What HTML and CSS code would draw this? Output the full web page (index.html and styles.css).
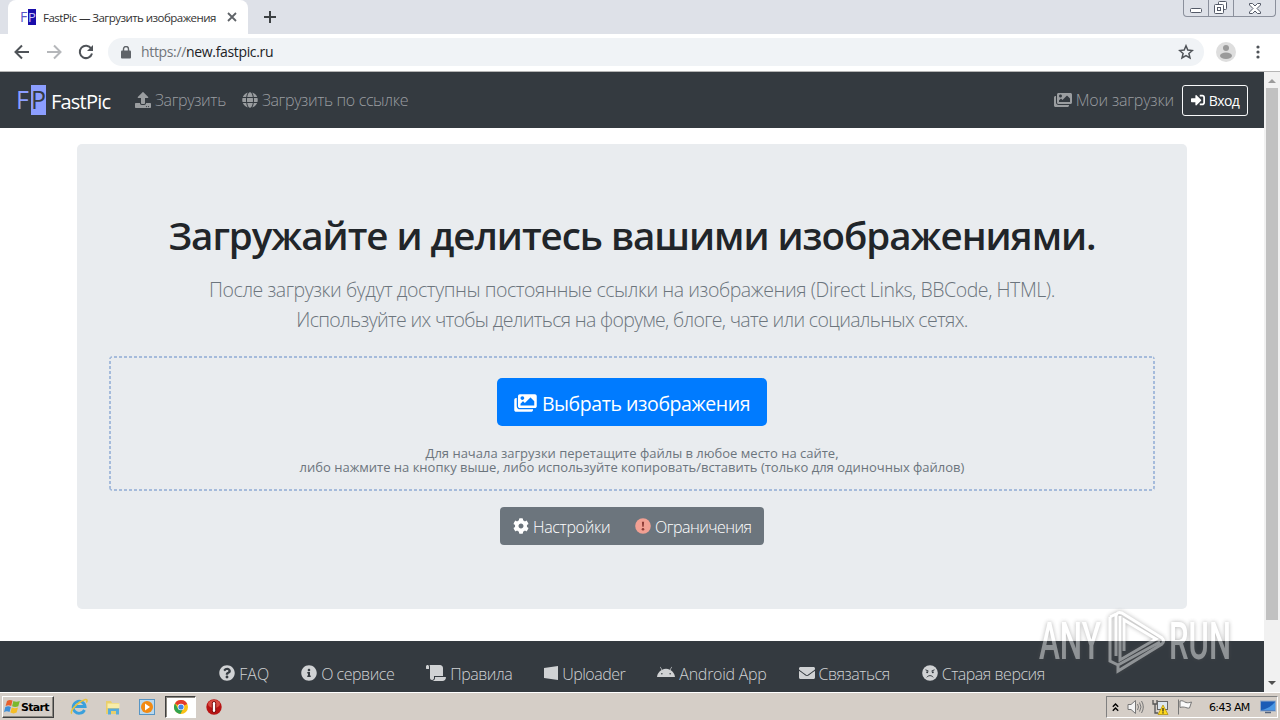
FILE: index.html
```html
<!DOCTYPE html>
<html lang="ru">

<head>
    <meta charset="UTF-8">
    <meta name="viewport" content="width=device-width, initial-scale=1.0">
    <title>FastPic — Загрузить изображения</title>
    <link rel="stylesheet" href="styles.css">
</head>

<body>
    <!-- icons -->
    <svg class="sprite" width="0" height="0">
        <symbol id="upload" viewBox="0 0 512 512"><path d="M296 384h-80c-13.3 0-24-10.7-24-24V192h-87.7c-17.8 0-26.7-21.5-14.1-34.1L242.3 5.7c7.5-7.5 19.8-7.5 27.3 0l152.2 152.2c12.6 12.6 3.7 34.1-14.1 34.1H320v168c0 13.3-10.7 24-24 24zm216-8v112c0 13.3-10.7 24-24 24H24c-13.3 0-24-10.7-24-24V376c0-13.3 10.7-24 24-24h136v8c0 30.9 25.1 56 56 56h80c30.9 0 56-25.1 56-56v-8h136c13.3 0 24 10.7 24 24zm-124 88c0-11-9-20-20-20s-20 9-20 20 9 20 20 20 20-9 20-20zm64 0c0-11-9-20-20-20s-20 9-20 20 9 20 20 20 20-9 20-20z"/></symbol>
        <symbol id="globe" viewBox="0 0 496 512"><path d="M336.5 160C322 70.7 287.8 8 248 8s-74 62.7-88.5 152h177zM152 256c0 22.2 1.2 43.5 3.3 64h185.3c2.1-20.5 3.3-41.8 3.3-64s-1.2-43.5-3.3-64H155.3c-2.1 20.5-3.3 41.8-3.3 64zm324.7-96c-28.6-67.9-86.5-120.4-158-141.6 24.4 33.8 41.2 84.7 50 141.6h108zM177.2 18.4C105.8 39.6 47.8 92.1 19.3 160h108c8.7-56.9 25.5-107.8 49.9-141.6zM487.4 192H372.7c2.1 21 3.3 42.5 3.3 64s-1.2 43-3.3 64h114.6c5.5-20.5 8.6-41.8 8.6-64s-3.1-43.5-8.5-64zM120 256c0-21.5 1.2-43 3.3-64H8.6C3.2 212.5 0 233.8 0 256s3.2 43.5 8.6 64h114.6c-2-21-3.2-42.5-3.2-64zm39.5 96c14.5 89.3 48.7 152 88.5 152s74-62.7 88.5-152h-177zm159.3 141.6c71.4-21.2 129.4-73.7 158-141.6h-108c-8.8 56.9-25.6 107.8-50 141.6zM19.3 352c28.6 67.9 86.5 120.4 158 141.6-24.4-33.8-41.2-84.7-50-141.6h-108z"/></symbol>
        <symbol id="images" viewBox="0 0 576 512"><path d="M480 416v16c0 26.51-21.49 48-48 48H48c-26.51 0-48-21.49-48-48V176c0-26.51 21.49-48 48-48h16v208c0 44.112 35.888 80 80 80h336zm96-80V80c0-26.51-21.49-48-48-48H144c-26.51 0-48 21.49-48 48v256c0 26.51 21.49 48 48 48h384c26.51 0 48-21.49 48-48zM256 128c0 26.51-21.49 48-48 48s-48-21.49-48-48 21.49-48 48-48 48 21.49 48 48zm-96 144l55.515-55.515c4.686-4.686 12.284-4.686 16.971 0L272 256l135.515-135.515c4.686-4.686 12.284-4.686 16.971 0L512 208v112H160v-48z"/></symbol>
        <symbol id="login" viewBox="0 0 512 512"><path d="M416 448h-84c-6.6 0-12-5.4-12-12v-40c0-6.6 5.4-12 12-12h84c17.7 0 32-14.3 32-32V160c0-17.7-14.3-32-32-32h-84c-6.6 0-12-5.4-12-12V76c0-6.6 5.4-12 12-12h84c53 0 96 43 96 96v192c0 53-43 96-96 96zm-47-201L201 79c-15-15-41-4.500-41 17v96H24c-13.300 0-24 10.700-24 24v96c0 13.300 10.700 24 24 24h136v96c0 21.500 26 32 41 17l168-168c9.300-9.400 9.300-24.600 0-34z"/></symbol>
        <symbol id="cog" viewBox="0 0 512 512"><path d="M487.4 315.7l-42.6-24.6c4.3-23.2 4.3-47 0-70.2l42.6-24.6c4.9-2.8 7.1-8.6 5.5-14-11.1-35.6-30-67.8-54.7-94.6-3.8-4.1-10-5.1-14.8-2.3L380.8 110c-17.9-15.4-38.5-27.3-60.8-35.1V25.8c0-5.6-3.9-10.5-9.4-11.7-36.7-8.2-74.3-7.8-109.2 0-5.5 1.2-9.4 6.1-9.4 11.7V75c-22.2 7.9-42.8 19.8-60.8 35.1L88.7 85.5c-4.9-2.8-11-1.9-14.8 2.3-24.7 26.7-43.6 58.9-54.7 94.6-1.7 5.4.6 11.2 5.5 14L67.3 221c-4.3 23.2-4.3 47 0 70.2l-42.6 24.6c-4.9 2.8-7.1 8.6-5.5 14 11.1 35.6 30 67.8 54.7 94.6 3.8 4.1 10 5.1 14.8 2.3l42.6-24.6c17.9 15.4 38.5 27.3 60.8 35.1v49.2c0 5.6 3.9 10.5 9.4 11.7 36.7 8.2 74.3 7.8 109.2 0 5.5-1.2 9.4-6.1 9.4-11.7v-49.2c22.2-7.9 42.8-19.8 60.8-35.1l42.6 24.6c4.9 2.8 11 1.9 14.8-2.3 24.7-26.7 43.6-58.9 54.7-94.6 1.5-5.5-.7-11.3-5.6-14.1zM256 336c-44.1 0-80-35.9-80-80s35.9-80 80-80 80 35.9 80 80-35.9 80-80 80z"/></symbol>
        <symbol id="question" viewBox="0 0 512 512"><path d="M504 256c0 136.997-111.043 248-248 248S8 392.997 8 256C8 119.083 119.043 8 256 8s248 111.083 248 248zM262.655 90c-54.497 0-89.255 22.957-116.549 63.758-3.536 5.286-2.353 12.415 2.715 16.258l34.699 26.31c5.205 3.947 12.621 3.008 16.665-2.122 17.864-22.658 30.113-35.797 57.303-35.797 20.429 0 45.698 13.148 45.698 32.958 0 14.976-12.363 22.667-32.534 33.976C247.128 238.528 216 254.941 216 296v4c0 6.627 5.373 12 12 12h56c6.627 0 12-5.373 12-12v-1.333c0-28.462 83.186-29.647 83.186-106.667 0-58.002-60.165-102-116.531-102zM256 338c-25.365 0-46 20.635-46 46 0 25.364 20.635 46 46 46s46-20.636 46-46c0-25.365-20.635-46-46-46z"/></symbol>
        <symbol id="info" viewBox="0 0 512 512"><path d="M256 8C119.043 8 8 119.083 8 256c0 136.997 111.043 248 248 248s248-111.003 248-248C504 119.083 392.957 8 256 8zm0 110c23.196 0 42 18.804 42 42s-18.804 42-42 42-42-18.804-42-42 18.804-42 42-42zm56 254c0 6.627-5.373 12-12 12h-88c-6.627 0-12-5.373-12-12v-24c0-6.627 5.373-12 12-12h12v-64h-12c-6.627 0-12-5.373-12-12v-24c0-6.627 5.373-12 12-12h64c6.627 0 12 5.373 12 12v100h12c6.627 0 12 5.373 12 12v24z"/></symbol>
        <symbol id="scroll" viewBox="0 0 640 512"><path d="M48 0C21.53 0 0 21.53 0 48v64c0 8.84 7.16 16 16 16h80V48C96 21.53 74.47 0 48 0zm208 412.57V352h288V96c0-52.94-43.06-96-96-96H111.59C121.74 13.41 128 29.92 128 48v368c0 38.87 34.65 69.65 74.75 63.12C234.22 474 256 444.46 256 412.57zM288 384v32c0 52.93-43.06 96-96 96h336c61.86 0 112-50.14 112-112 0-8.84-7.16-16-16-16H288z"/></symbol>
        <symbol id="windows" viewBox="0 0 448 512"><path d="M0 94L448 32v448L0 413z"/></symbol>
        <symbol id="android" viewBox="0 0 576 512"><path d="M420.55,301.93a24,24,0,1,1,24-24,24,24,0,0,1-24,24m-265.1,0a24,24,0,1,1,24-24,24,24,0,0,1-24,24m273.7-144.48,47.94-83a10,10,0,1,0-17.27-10h0l-48.54,84.07a301.25,301.25,0,0,0-246.56,0L116.18,64.45a10,10,0,1,0-17.27,10h0l47.94,83C64.53,202.22,8.24,285.55,0,384H576c-8.24-98.45-64.54-181.78-146.85-226.55"/></symbol>
        <symbol id="envelope" viewBox="0 0 512 512"><path d="M502.3 190.8c3.9-3.1 9.7-.2 9.7 4.7V400c0 26.5-21.5 48-48 48H48c-26.5 0-48-21.5-48-48V195.6c0-5 5.7-7.8 9.7-4.7 22.4 17.4 52.1 39.5 154.1 113.6 21.1 15.4 56.7 47.8 92.2 47.6 35.7.3 72-32.8 92.3-47.6 102-74.1 131.6-96.3 154-113.7zM256 320c23.2.4 56.6-29.2 73.4-41.4 132.7-96.3 142.8-104.7 173.4-128.7 5.8-4.5 9.2-11.5 9.2-18.9v-19c0-26.5-21.5-48-48-48H48c-26.5 0-48 21.5-48 48v19c0 7.4 3.4 14.3 9.2 18.9 30.6 23.9 40.7 32.4 173.4 128.7 16.8 12.2 50.2 41.8 73.4 41.4z"/></symbol>
    </svg>

    <header class="tabstrip">
        <div class="tab">
            <svg class="favicon" width="16" height="16" viewBox="0 0 16 16">
                <rect x="8" width="8" height="16" fill="#1a0dab"/>
                <text class="logo-letter" x="0" y="13" font-size="14" fill="#5a55c8">F</text>
                <text class="logo-letter" x="8" y="13" font-size="13" fill="#c9c6f5">P</text>
            </svg>
            <span class="tab-title">FastPic — Загрузить изображения</span>
            <svg class="tab-close" width="10" height="10" viewBox="0 0 10 10"><path d="M1 1l8 8M9 1L1 9" stroke="#5f6368" stroke-width="1.8"/></svg>
        </div>
        <svg class="new-tab" width="12" height="12" viewBox="0 0 12 12"><path d="M6 0v12M0 6h12" stroke="#3c4043" stroke-width="2"/></svg>
        <div class="window-controls">
            <span class="wc wc-min"><svg width="13" height="6" viewBox="0 0 13 6"><rect x=".5" y=".5" width="11" height="4" rx="1" fill="#fff" stroke="#545a68"/></svg></span>
            <span class="wc wc-max"><svg width="14" height="14" viewBox="0 0 14 14" fill="#fff" stroke="#545a68"><rect x="4.500" y=".5" width="8" height="8" rx="1"/><rect x=".5" y="3.500" width="9" height="9" rx="1"/><rect x="3.500" y="6.500" width="3" height="3"/></svg></span>
            <span class="wc wc-close"><svg width="12" height="11" viewBox="0 0 12 11"><path d="M.5.5h3L6 3 8.500.5h3v1.500L8 5.500l3.500 3.500v1.500h-3L6 8l-2.500 2.500h-3V9L4 5.500.5 2z" fill="#fff" stroke="#545a68"/></svg></span>
        </div>
    </header>

    <div class="toolbar">
        <svg class="tool" width="16" height="16" viewBox="0 0 16 16"><path d="M15 8H2M8 1.500L1.500 8 8 14.500" fill="none" stroke="#4f5358" stroke-width="2"/></svg>
        <svg class="tool" width="16" height="16" viewBox="0 0 16 16"><path d="M1 8h13M8 1.500L14.500 8 8 14.500" fill="none" stroke="#b5b7ba" stroke-width="2"/></svg>
        <svg class="tool" width="16" height="16" viewBox="0 0 16 16"><path d="M13.200 4.500A6.200 6.200 0 1 0 14 9.500" fill="none" stroke="#4f5358" stroke-width="2"/><path d="M15 1v6H9z" fill="#4f5358"/></svg>
        <div class="omnibox">
            <svg width="10" height="13" viewBox="0 0 10 13"><rect y="4.500" width="10" height="8" rx="1" fill="#5f6368"/><path d="M2.500 5V3a2.500 2.500 0 0 1 5 0v2" fill="none" stroke="#5f6368" stroke-width="1.400"/></svg>
            <span class="url"><span class="scheme">https://</span>new.fastpic.ru</span>
            <svg class="star" width="16" height="16" viewBox="0 0 16 16"><path d="M8 1.800l1.800 4.300 4.600.4-3.500 3 1.100 4.500L8 11.600 4 14l1.100-4.500-3.500-3 4.600-.4z" fill="none" stroke="#4f5358" stroke-width="1.500"/></svg>
        </div>
        <svg class="avatar" width="20" height="20" viewBox="0 0 20 20"><circle cx="10" cy="10" r="10" fill="#dedede"/><circle cx="10" cy="6" r="3" fill="#9a9a9a"/><ellipse cx="10" cy="13.800" rx="6" ry="3.200" fill="#9a9a9a"/></svg>
        <svg class="dots" width="4" height="14" viewBox="0 0 4 14" fill="#4f5358"><circle cx="2" cy="2" r="1.600"/><circle cx="2" cy="7" r="1.600"/><circle cx="2" cy="12" r="1.600"/></svg>
    </div>

    <div class="viewport">
        <div class="page">
            <nav class="navbar">
                <a class="brand">
                    <svg width="30" height="30" viewBox="0 0 30 30">
                        <rect x="15" width="15" height="30" fill="#8c9eff"/>
                        <text class="logo-letter" x="0" y="24" font-size="25" fill="#8c9eff">F</text>
                        <text class="logo-letter" x="15" y="24" font-size="25" fill="#343a40">P</text>
                    </svg>
                    <span>FastPic</span>
                </a>
                <a class="nav-link"><svg class="icon"><use href="#upload"/></svg><span>Загрузить</span></a>
                <a class="nav-link"><svg class="icon"><use href="#globe"/></svg><span>Загрузить по ссылке</span></a>
                <a class="nav-link nav-uploads"><svg class="icon wide"><use href="#images"/></svg><span>Мои загрузки</span></a>
                <a class="btn-login"><svg class="icon small"><use href="#login"/></svg><span>Вход</span></a>
            </nav>

            <main class="jumbotron">
                <h1>Загружайте и делитесь вашими изображениями.</h1>
                <p class="lead">После загрузки будут доступны постоянные ссылки на изображения (Direct Links, BBCode, HTML).</p>
                <p class="lead second">Используйте их чтобы делиться на форуме, блоге, чате или социальных сетях.</p>
                <div class="dropzone">
                    <a class="btn-select"><svg class="icon big"><use href="#images"/></svg><span>Выбрать изображения</span></a>
                    <p class="hint">Для начала загрузки перетащите файлы в любое место на сайте,</p>
                    <p class="hint">либо нажмите на кнопку выше, либо используйте копировать/вставить (только для одиночных файлов)</p>
                </div>
                <div class="btn-group">
                    <a class="btn-settings"><svg class="icon"><use href="#cog"/></svg><span>Настройки</span></a>
                    <a class="btn-limits">
                        <svg class="icon" viewBox="0 0 16 16"><circle cx="8" cy="8" r="7.800" fill="#f2a093"/><path d="M6.900 3.800h2.200l-.4 5H7.300z" fill="#8d3b36"/><circle cx="8" cy="11.200" r="1.300" fill="#8d3b36"/></svg>
                        <span>Ограничения</span>
                    </a>
                </div>
            </main>

            <footer class="footer">
                <a class="f-faq"><svg class="icon"><use href="#question"/></svg><span>FAQ</span></a>
                <a class="f-about"><svg class="icon"><use href="#info"/></svg><span>О сервисе</span></a>
                <a class="f-rules"><svg class="icon wider"><use href="#scroll"/></svg><span>Правила</span></a>
                <a class="f-uploader"><svg class="icon narrow"><use href="#windows"/></svg><span>Uploader</span></a>
                <a class="f-android"><svg class="icon wide"><use href="#android"/></svg><span>Android App</span></a>
                <a class="f-contact"><svg class="icon"><use href="#envelope"/></svg><span>Связаться</span></a>
                <a class="f-old">
                    <svg class="icon" viewBox="0 0 16 16"><circle cx="8" cy="8" r="7.800"/><path d="M3.500 4.800l3 1.300M12.500 4.800l-3 1.300M4.800 12.300c1.500-2.200 4.900-2.200 6.400 0" fill="none" stroke="#343a40"/><circle cx="5.200" cy="7.200" r="1" fill="#343a40"/><circle cx="10.800" cy="7.200" r="1" fill="#343a40"/></svg>
                    <span>Старая версия</span>
                </a>
            </footer>
        </div>
        <div class="scrollbar">
            <span class="arrow up"></span>
            <span class="thumb"></span>
            <span class="arrow down"></span>
        </div>
    </div>

    <div class="taskbar">
        <div class="start">
            <svg width="17" height="16" viewBox="0 0 17 16">
                <path d="M3 2c2-1.500 4-1.200 5.500-.4L7.200 7C5.500 6 3.500 6 1.600 7z" fill="#e8602c"/>
                <path d="M9.400 2c2 1 4 1 6.400 0l-1.500 5.300c-2 1-4.300 1-6.200 0z" fill="#7ab82d"/>
                <path d="M1.300 8c2-1.200 4-1 5.600-.1l-1.400 5.200c-1.700-1-3.700-1-5.500.1z" fill="#3f8fd8"/>
                <path d="M7.800 8.400c2 1 4 1 6.200 0l-1.400 5.200c-2 1.100-4.300 1-6.200 0z" fill="#f5bd26"/>
            </svg>
            <span>Start</span>
        </div>
        <div class="quick">
            <svg width="18" height="18" viewBox="0 0 18 18"><path d="M14.500 12a6 6 0 1 1 .6-3.500H4" fill="none" stroke="#3aa0dc" stroke-width="2.800"/><path d="M2 15.500C-1 14 7 4 15.500 1.500c2-.3 1.800 1.500.8 3" fill="none" stroke="#e8c33c" stroke-width="1.500"/></svg>
            <svg width="18" height="18" viewBox="0 0 18 18"><path d="M2 3h5l1 2h7v11H2z" fill="#e9cf6c"/><path d="M3.500 5.500h12V10h-12z" fill="#f8eda9"/><path d="M4 16.500v-6h11v6h-3V13H7v3.500z" fill="#58acdb"/></svg>
            <svg width="18" height="18" viewBox="0 0 18 18"><rect x="1.500" y="1.500" width="15" height="15" fill="#b9d8ee" stroke="#5795c4"/><circle cx="9" cy="9" r="6" fill="#f28a13"/><path d="M7 5.500v7l5-3.500z" fill="#fff"/></svg>
        </div>
        <div class="task-active">
            <svg width="14" height="14" viewBox="0 0 14 14"><circle cx="7" cy="7" r="7" fill="#fbc116"/><path d="M7 7L1 3.400A7 7 0 0 1 13.200 4z" fill="#e33b2e"/><path d="M1 3.400A7 7 0 0 0 6.400 14L9 9 4 8.500z" fill="#31a350"/><circle cx="7" cy="7" r="3.300" fill="#fff"/><circle cx="7" cy="7" r="2.600" fill="#4285e8"/></svg>
        </div>
        <svg class="opera" width="16" height="16" viewBox="0 0 16 16"><circle cx="8" cy="8" r="7.700" fill="#b81414"/><ellipse cx="8" cy="5" rx="6" ry="4" fill="#d84c42"/><rect x="6.300" y="2.500" width="3.400" height="11" rx="1.700" fill="#fff" stroke="#7c0b0b"/></svg>
        <div class="tray">
            <svg width="7" height="9" viewBox="0 0 7 9"><path d="M.8 3.800l2.700-2.700 2.700 2.700M.8 7.800l2.700-2.700 2.700 2.700" fill="none" stroke="#000" stroke-width="1.400"/></svg>
            <svg width="17" height="16" viewBox="0 0 17 16"><path d="M1 5.500h3L8.500 1.500v13L4 10.500H1z" fill="#f4f4f4" stroke="#777"/><path d="M10.500 5q2 3 0 6M12.500 3.500q3 4.500 0 9M14.500 2q3.600 6 0 12" fill="none" stroke="#777"/></svg>
            <svg width="17" height="16" viewBox="0 0 17 16"><path d="M1 1v4h4V1M3 5v9h3" fill="none" stroke="#555" stroke-width="1.300"/><rect x="5.500" y="2.500" width="10" height="8" fill="#dce6ee" stroke="#666"/><path d="M11 6l5 9.500H6z" fill="#ffd91c" stroke="#ae8a00" stroke-width=".7"/><path d="M11 9v3.500M11 13.300v1.200" stroke="#222" stroke-width="1.200"/></svg>
            <svg width="16" height="16" viewBox="0 0 16 16"><path d="M1.500.5v15M3 2c3-1 4 1 6 1.500s3 .2 5.500-.5l-2 6c-2 .5-3-.5-5-.8S4.500 8 3 8.500z" fill="#fafafa" stroke="#777"/></svg>
            <span class="clock">6:43 AM</span>
            <svg width="16" height="14" viewBox="0 0 16 14"><rect x=".5" y="1" width="15" height="10" fill="#1b5cb6" stroke="#93a9c8"/><path d="M1 10Q9 9 15 2v8z" fill="#4c98e4"/><path d="M5 12.500h6" stroke="#55647c" stroke-width="1.500"/></svg>
        </div>
    </div>

    <!-- watermark over the page -->
    <svg class="watermark" width="200" height="70" viewBox="0 0 200 70">
        <text x="5" y="54" textLength="62" lengthAdjust="spacingAndGlyphs">ANY</text>
        <text x="135" y="54" textLength="62" lengthAdjust="spacingAndGlyphs">RUN</text>
        <path d="M90 46V15l32 19-36 21V11M76 12v44l8 4M76 12l6-3M84 60l42-23M84 60v6l44-27q3-3 0-6L88 8q-5-2-6 3v40"/>
    </svg>
</body>

</html>
```
FILE: styles.css
```css
* {
    box-sizing: border-box;
}

body {
    margin: 0;
    width: 1280px;
    height: 720px;
    display: flex;
    flex-direction: column;
    overflow: hidden;
    position: relative;
    background-color: #fff;
    font-family: "Open Sans", "Noto Sans", sans-serif;
    font-size: 16px;
}

.sprite {
    position: absolute;
}

svg {
    flex: none;
    display: block;
}

span,
p,
h1 {
    white-space: nowrap;
}

.logo-letter {
    font-family: "Open Sans", sans-serif;
}

.favicon,
.brand svg {
    overflow: visible;
}

/* browser */
.tabstrip {
    height: 34px;
    flex: none;
    display: flex;
    background: #dee1e8;
    padding-left: 8px;
}

.tab {
    width: 240px;
    display: flex;
    align-items: center;
    padding-left: 12px;
    background: #fff;
    border-radius: 8px 8px 0 0;
}

.tab-title {
    margin-left: 7px;
    width: 173px;
    font-size: 11.5px;
    letter-spacing: -0.54px;
    color: #333;
}

.tab-close {
    margin-left: 11px;
}

.new-tab {
    margin: 11px 0 0 16px;
}

.window-controls {
    margin-left: auto;
    margin-right: 4px;
    display: flex;
    width: 93px;
    height: 17px;
    border: 1px solid #8b909c;
    border-top: 0;
    border-radius: 0 0 4px 4px;
}

.wc {
    display: flex;
    justify-content: center;
    align-items: center;
    width: 25px;
    border-right: 1px solid #8b909c;
}

.wc-min {
    padding-top: 5px;
}

.wc-close {
    width: 41px;
    border: 0;
}

.toolbar {
    height: 38px;
    flex: none;
    display: flex;
    align-items: center;
    padding: 0 20px 1px 14px;
    border-bottom: 1px solid #b5b5b5;
}

.tool {
    margin-right: 16px;
}

.omnibox {
    width: 1096px;
    height: 28px;
    margin-left: -2px;
    display: flex;
    align-items: center;
    padding: 0 10px 0 13px;
    border-radius: 14px;
    background: #f0f3f6;
}

.url {
    margin-left: 10px;
    padding-bottom: 1px;
    font-size: 14px;
    letter-spacing: -0.34px;
    color: #202124;
}

.scheme {
    color: #70757a;
}

.star {
    margin-left: auto;
}

.avatar {
    margin-left: 12px;
}

.dots {
    margin-left: auto;
}

/* page */
.viewport {
    height: 620px;
    flex: none;
    display: flex;
}

.page {
    width: 1264px;
    overflow: hidden;
}

.icon {
    width: 16px;
    height: 16px;
    fill: currentColor;
}

.icon.wide {
    width: 18px;
}

.icon.wider {
    width: 20px;
}

.icon.narrow {
    width: 14px;
}

.icon.small {
    width: 14px;
    height: 14px;
}

.icon.big {
    width: 23px;
    height: 20px;
}

.navbar {
    height: 56px;
    display: flex;
    align-items: center;
    padding: 0 16px;
    background: #343a40;
    color: #9a9da0;
}

.brand {
    display: flex;
    align-items: center;
    width: 103px;
    margin-right: 16px;
    gap: 5px;
    color: #fff;
    font-size: 20px;
    letter-spacing: -0.8px;
}

.brand span {
    padding-top: 3px;
}

.nav-link {
    display: flex;
    align-items: center;
    gap: 4px;
    margin-right: 16px;
    font-weight: 300;
    letter-spacing: -0.36px;
}

.nav-uploads {
    margin: 0 8px 0 auto;
    letter-spacing: -0.18px;
}

.btn-login {
    width: 66px;
    height: 31px;
    display: flex;
    align-items: center;
    justify-content: center;
    gap: 4px;
    border: 1px solid #f8f9fa;
    border-radius: 3px;
    color: #fff;
    font-size: 14px;
    letter-spacing: -0.6px;
}

.jumbotron {
    width: 1110px;
    height: 465px;
    margin: 16px auto 32px 77px;
    padding: 64px 32px;
    background: #e9ecef;
    border-radius: 5px;
    text-align: center;
    color: #6c757d;
}

h1 {
    margin: 0 0 13px;
    font-size: 38.5px;
    line-height: 54px;
    font-weight: 600;
    letter-spacing: -1.04px;
    color: #212529;
}

.lead {
    margin: 0;
    font-size: 19.5px;
    line-height: 30px;
    font-weight: 300;
    letter-spacing: -0.44px;
}

.lead.second {
    letter-spacing: -0.67px;
}

/* short dashes on all four sides */
.dropzone {
    height: 135px;
    margin: 21px 0 16px;
    padding-top: 22px;
    display: flex;
    flex-direction: column;
    align-items: center;
    border-radius: 4px;
    background:
        repeating-linear-gradient(90deg, #a5bbdb 0 3px, transparent 3px 5px) top / 100% 2px no-repeat,
        repeating-linear-gradient(90deg, #a5bbdb 0 3px, transparent 3px 5px) bottom / 100% 2px no-repeat,
        repeating-linear-gradient(#a5bbdb 0 3px, transparent 3px 5px) left / 2px 100% no-repeat,
        repeating-linear-gradient(#a5bbdb 0 3px, transparent 3px 5px) right / 2px 100% no-repeat;
}

.btn-select {
    width: 270px;
    height: 48px;
    margin-bottom: 20px;
    display: flex;
    align-items: center;
    justify-content: center;
    gap: 5px;
    background: #007bff;
    border-radius: 5px;
    color: #fff;
    font-size: 19.5px;
    letter-spacing: -0.43px;
}

.btn-select svg,
.btn-select span {
    margin-top: 2px;
}

.hint {
    margin: 0;
    font-size: 13px;
    line-height: 14px;
}

.btn-group {
    width: 264px;
    height: 38px;
    margin: 0 auto;
    display: flex;
    background: #6c757d;
    border-radius: 4px;
    color: #fff;
    font-weight: 300;
}

.btn-group a {
    display: flex;
    align-items: center;
    gap: 4px;
    padding-left: 13px;
}

.btn-group span {
    padding-top: 2px;
}

.btn-settings {
    width: 122px;
    letter-spacing: -0.33px;
}

.btn-limits {
    letter-spacing: -0.52px;
}

.footer {
    height: 80px;
    display: flex;
    justify-content: center;
    gap: 32px;
    padding-top: 20px;
    background: #343a40;
    color: #d0d2d4;
    font-weight: 300;
    letter-spacing: -0.48px;
}

.footer a {
    display: flex;
    align-items: center;
    height: 24px;
    gap: 4px;
}

.footer span {
    padding-top: 2px;
}

.f-faq {
    letter-spacing: 0;
}

.f-android {
    letter-spacing: -0.27px;
}

.scrollbar {
    width: 16px;
    display: flex;
    flex-direction: column;
    align-items: center;
    background: #f1f1f1;
}

.arrow {
    border: 4px solid transparent;
}

.arrow.up {
    margin-top: 3px;
    border-bottom-color: #9b9b9b;
}

.thumb {
    width: 12px;
    height: 532px;
    margin-top: 5px;
    background: #c1c1c1;
}

.arrow.down {
    margin: auto 0 3px;
    border-top-color: #505050;
}

/* desktop */
.taskbar {
    height: 28px;
    flex: none;
    display: flex;
    align-items: center;
    padding: 1px 2px 0;
    background: #d5cec7;
    border-top: 1px solid #fff;
}

.start {
    width: 52px;
    height: 22px;
    display: flex;
    align-items: center;
    padding-left: 1px;
    border: 1px solid;
    border-color: #fff #404040 #404040 #fff;
    box-shadow: inset -1px -1px #8a8780;
    font: bold 11px "DejaVu Sans", sans-serif;
    letter-spacing: -0.7px;
}

.quick {
    display: flex;
    gap: 16px;
    margin-left: 16px;
}

.task-active {
    width: 31px;
    height: 22px;
    margin-left: 9px;
    display: flex;
    align-items: center;
    justify-content: center;
    background: #fff;
    border: 1px solid;
    border-color: #404040 #fff #fff #404040;
    box-shadow: inset 1px 1px #8a8780;
}

.opera {
    margin-left: 10px;
}

.tray {
    width: 172px;
    height: 22px;
    margin-left: auto;
    display: flex;
    align-items: center;
    padding-left: 5px;
    border: 1px solid;
    border-color: #808080 #fff #fff #808080;
    gap: 8px;
}

.clock {
    width: 41px;
    margin: 0 2px 0 8px;
    font: 11px "DejaVu Sans", sans-serif;
    letter-spacing: -0.65px;
}

.watermark {
    position: absolute;
    left: 1034px;
    top: 605px;
    opacity: 0.45;
    filter: drop-shadow(0 0 2px #555);
}

.watermark text {
    font-family: Roboto, sans-serif;
    font-size: 51px;
    font-weight: 500;
    fill: #fff;
}

.watermark path {
    fill: none;
    stroke: #fff;
    stroke-width: 3;
}
```
